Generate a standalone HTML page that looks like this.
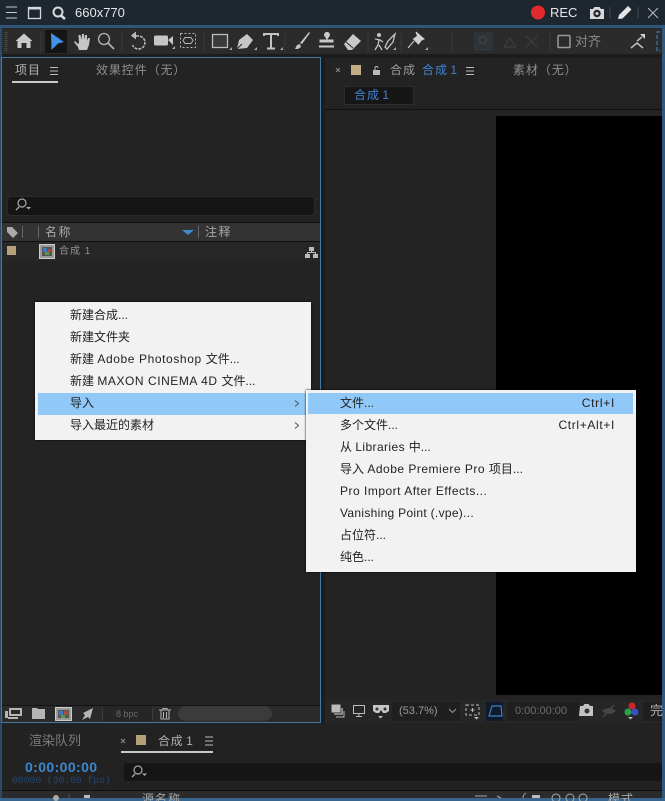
<!DOCTYPE html>
<html lang="zh"><head><meta charset="utf-8"><style>
html,body{margin:0;padding:0;background:#1c1c1c}
#p{position:relative;width:665px;height:801px;overflow:hidden;background:#1d1d1d;font-family:"Liberation Sans","Noto Sans CJK SC",sans-serif}
#p div{position:absolute}
.t{white-space:nowrap;line-height:16px;font-size:12px;color:#8f8f8f}
.m{white-space:nowrap;line-height:16px;font-size:12px;color:#222}
svg{position:absolute;left:0;top:0}
</style></head><body><div id="p">
<div style="left:0;top:0;width:665px;height:25px;background:#1e2630"></div>
<div style="left:0;top:25px;width:665px;height:3px;background:#30557a"></div>
<div style="left:2px;top:28px;width:663px;height:26px;background:#2b2b2b"></div>
<div style="left:2px;top:54px;width:663px;height:4px;background:#1c1c1c"></div>
<div style="left:0;top:28px;width:2px;height:773px;background:#2c4a68"></div>
<div style="left:662px;top:28px;width:3px;height:773px;background:#2f5a80"></div>
<div style="left:0;top:798px;width:665px;height:3px;background:#37658d"></div>

<div style="left:1px;top:57px;width:318px;height:664px;background:#232323;border:1px solid #47799f"></div>
<div style="left:325px;top:58px;width:337px;height:665px;background:#232323"></div>
<div style="left:496px;top:116px;width:166px;height:579px;background:#000"></div>
<div style="left:325px;top:109px;width:337px;height:1px;background:#111"></div>
<div style="left:345px;top:87px;width:68px;height:17px;background:#161616;box-shadow:0 0 0 1px #2c2c2c"></div>

<!-- project panel -->
<div style="left:12px;top:81px;width:46px;height:2px;background:#c9c9c9"></div>
<div style="left:8px;top:197px;width:306px;height:18px;background:#151515;border-radius:3px;box-shadow:0 0 0 1px #2b2b2b"></div>
<div style="left:2px;top:222px;width:318px;height:20px;background:#333;border-top:1px solid #0f0f0f;border-bottom:1px solid #0f0f0f;box-sizing:border-box"></div>
<div style="left:2px;top:242px;width:318px;height:19px;background:#272727"></div>
<div style="left:7px;top:246px;width:9px;height:9px;background:#b5a079"></div>
<div style="left:2px;top:705px;width:318px;height:17px;background:#2a2a2a;border-top:1px solid #141414;box-sizing:border-box"></div>
<div style="left:178px;top:706px;width:94px;height:15px;background:#3b3b3b;border-radius:8px"></div>
<div style="left:102px;top:706px;width:50px;height:15px;background:#262626"></div>

<!-- viewer bar -->
<div style="left:325px;top:700px;width:337px;height:23px;background:#262626"></div>
<div style="left:392px;top:702px;width:68px;height:19px;background:#1f1f1f"></div>
<div style="left:507px;top:702px;width:72px;height:19px;background:#1f1f1f"></div>
<div style="left:643px;top:702px;width:19px;height:19px;background:#1f1f1f"></div>
<div style="left:486px;top:702px;width:17px;height:19px;background:#101a28"></div>

<!-- timeline -->
<div style="left:2px;top:723px;width:660px;height:75px;background:#222"></div>
<div style="left:121px;top:751px;width:92px;height:2px;background:#c9c9c9"></div>
<div style="left:136px;top:735px;width:10px;height:10px;background:#b5a079"></div>
<div style="left:124px;top:763px;width:538px;height:18px;background:#151515;border-radius:3px"></div>
<div style="left:2px;top:790px;width:660px;height:1px;background:#0f0f0f"></div>
<div style="left:2px;top:791px;width:660px;height:7px;background:#2b2b2b"></div>

<svg width="665" height="801" viewBox="0 0 665 801" fill="none">
<!-- top bar -->
<path d="M6 7H17M6 12.500H17M6 18H17" stroke="#c4c8cc"/>
<rect x="28.500" y="7.500" width="12" height="11" stroke="#d5d8da" stroke-width="1.300"/><path d="M28 8.500H41" stroke="#d5d8da" stroke-width="2"/>
<circle cx="58" cy="12" r="4.500" stroke="#d8dadc" stroke-width="2"/><path d="M61 15.500L65 19" stroke="#d8dadc" stroke-width="2.500"/>
<circle cx="538" cy="12.500" r="7" fill="#e02a2e"/>
<path d="M590 9h3l1.500-2h5l1.500 2h3v10h-14z" fill="#d8d8d8"/><circle cx="597" cy="13.500" r="3.200" fill="#20262e" stroke="#20262e"/><circle cx="597" cy="13.500" r="1.500" fill="#d8d8d8"/>
<path d="M610 7v11M638 7v11" stroke="#454b52"/>
<path d="M618 19l1-4 9-9 3.500 3.500-9 9z" fill="#e4e4e4"/>
<path d="M648 8l10 10M658 8l-10 10" stroke="#b8bcc0"/>
<!-- toolbar -->
<path d="M6 32v19" stroke="#4a4a4a" stroke-width="3" stroke-dasharray="1 1"/>
<path d="M15.500 41l8.500-7.500 8.500 7.500h-2v7h-4v-5h-5v5h-4v-7z" fill="#c9c9c9"/>
<rect x="45" y="30" width="22" height="23" fill="#151515"/>
<path d="M51 33l13 9-6 1.500-6.500 6.500z" fill="#3f93e4"/>
<path d="M74 42l4 5 1 3h8l2-5 1-7-2 0-1 3 0-6h-2l-1 5 0-6h-2l-.5 6-1-5h-2l.5 8-1 1-3-3z" fill="#c6c6c6"/>
<circle cx="104" cy="39" r="5.500" stroke="#b5b5b5" stroke-width="1.300"/><path d="M108 43l6 6" stroke="#b5b5b5" stroke-width="1.600"/>
<path d="M122 32v20M41 32v20M204 32v20M285 32v20M368 32v20M401 32v20M452 32v20M550 32v20" stroke="#3a3a3a"/>
<path d="M132 36h6.500a6.500 6.500 0 1 1-6 9" stroke="#bbb" stroke-width="1.500" stroke-dasharray="3 1"/><path d="M136 31.500v8l-5-4z" fill="#bbb"/>
<rect x="154" y="35.500" width="14" height="10" rx="1.500" fill="#c6c6c6"/><path d="M168 40l5-4v9z" fill="#c6c6c6"/>
<rect x="180.500" y="33.500" width="15" height="14" stroke="#b5b5b5" stroke-dasharray="2 2"/><path d="M185 37.500h6l2 3-2 3h-6l-2-3z" stroke="#b5b5b5"/>
<rect x="212.500" y="34.500" width="15" height="13" fill="#3a3a3a" stroke="#bdbdbd" stroke-width="1.300"/>
<path d="M237 49l2-9 8-6 6 6-6 8z" fill="#c6c6c6"/><path d="M237 49l5-5" stroke="#2b2b2b"/>
<path d="M264 36v-2h14v2M271 34v14M267 48.500h8" stroke="#c4c4c4" stroke-width="2"/>
<path d="M295 49l2-4 3-1 1 3-3 2zM300 43l9-11 1 1-8 11z" fill="#c4c4c4"/>
<path d="M326.500 39.500l-1-2a3 3 0 1 1 3 0l-1 2h6v3h-14v-3zM319 45.500h15v2h-15z" fill="#c8c8c8"/>
<path d="M344 44l9-10 8 7-9 9h-4z" fill="#c8c8c8"/><path d="M346 42l7 6" stroke="#2b2b2b"/>
<circle cx="379" cy="35" r="2" fill="#c4c4c4"/><path d="M375 39l5 1 3 2M379 40l-1 5-3 5M379 45l3 5M385 47l3-6 7-7-2 8-6 7z" stroke="#c4c4c4" stroke-width="1.300"/>
<path d="M416 32l8 7-2.500 1-3 4-5-5 4-3zM414 41l-6 7" fill="#cfcfcf" stroke="#cfcfcf"/>
<rect x="474" y="32" width="19" height="19" fill="#2f3438"/><circle cx="483" cy="40" r="3.500" stroke="#42474b"/>
<path d="M504 47l6-9 6 9z" stroke="#414141"/><path d="M526 36l11 11M537 36l-11 11" stroke="#414141"/>
<rect x="558" y="35.500" width="12" height="12" rx="1" stroke="#9a9a9a" stroke-width="1.500"/>
<path d="M631 48l6-5 6 5M637 41l5-4" stroke="#c0c0c0" stroke-width="1.500"/><path d="M640 34h5v5z" fill="#d4d4d4"/>
<path d="M660 32h-3v19h3" stroke="#3a6d9b" stroke-width="1.400" stroke-dasharray="4 2"/>
<!-- corner carets -->
<path d="M172 49h3v-3zM229 50h3v-3zM254 50h3v-3zM280 50h3v-3zM393 50h3v-3zM425 50h3v-3z" fill="#aaa"/>
<!-- tabs menu icons -->
<path d="M50 67.500h8M50 71h8M50 74.500h8M466 67.500h8M466 71h8M466 74.500h8M205 737h8M205 741h8M205 745h8" stroke="#bbb"/>
<path d="M336 68l4 4M340 68l-4 4M121 739l4 4M125 739l-4 4" stroke="#8a8a8a"/>
<rect x="351" y="65" width="10" height="10" fill="#c4ad85"/>
<rect x="373" y="70" width="7" height="5" fill="#bbb"/><path d="M375 70v-2a1.500 1.500 0 0 1 3 0" stroke="#bbb"/>
<!-- search icons -->
<circle cx="22" cy="203" r="4" stroke="#aaa" stroke-width="1.200"/><path d="M19 207l-3 3" stroke="#aaa" stroke-width="1.300"/><path d="M26 207h5l-2.500 2.500z" fill="#aaa"/>
<circle cx="138" cy="770" r="4" stroke="#aaa" stroke-width="1.200"/><path d="M135 774l-3 3" stroke="#aaa" stroke-width="1.300"/><path d="M142 773.500h5l-2.500 2.500z" fill="#aaa"/>
<!-- list header -->
<path d="M7 227h5l6 6-5 5-6-6z" fill="#aaa"/>
<path d="M22.500 226v12M38.500 226v12M198.500 226v12" stroke="#666"/>
<path d="M182 230h12l-6 5z" fill="#3f8ad4"/>
<!-- comp icon -->
<rect x="39.500" y="244.500" width="15" height="14" fill="#999" stroke="#ccc"/><rect x="42" y="247" width="10" height="9" fill="#555"/><rect x="43" y="248" width="4" height="4" fill="#3d7bc4"/><rect x="48" y="249" width="3" height="3" fill="#b04a3a"/><rect x="45" y="252" width="4" height="3" fill="#5a9a50"/>
<path d="M309 247h5v4h-5zM305 254h5v4h-5zM313 254h5v4h-5z" fill="#bbb"/><path d="M311.500 251v2M307.500 254v-1.500h8v1.500" stroke="#bbb"/>
<!-- project footer icons -->
<rect x="9" y="708" width="13" height="8" fill="#b5b5b5"/><rect x="11" y="710" width="9" height="4" fill="#2a2a2a"/><path d="M5 711h3v7H5zM8 717h10v2H8z" fill="#b5b5b5"/>
<path d="M32 708h5l1 1h7v10H32z" fill="#b5b5b5"/>
<rect x="55.500" y="707.500" width="16" height="13" fill="#999" stroke="#ccc"/><rect x="58" y="710" width="11" height="8" fill="#555"/><rect x="59" y="711" width="4" height="4" fill="#3d7bc4"/><rect x="64" y="711" width="4" height="4" fill="#b04a3a"/><rect x="61" y="715" width="4" height="3" fill="#5a9a50"/>
<path d="M93 708l-10 5 2 2-3 5 6-3 2 2z" fill="#b5b5b5"/>
<path d="M159 710h12M161 710v9h8v-9M163.500 712v6M166.500 712v6M163 710v-1.500h4v1.500" stroke="#b5b5b5"/>
<path d="M152.500 708v12M102.500 708v12" stroke="#3c3c3c"/>
<!-- viewer bar icons -->
<rect x="331.500" y="704.500" width="9" height="8" fill="#bbb"/><path d="M342 708v6h-8" stroke="#bbb" stroke-width="1.300"/><path d="M344 711v6h-8" stroke="#bbb"/>
<rect x="353.500" y="705.500" width="11" height="8" stroke="#bbb"/><path d="M356 716.500h6M359 714v2" stroke="#bbb"/>
<path d="M373 705h16v6l-3 2h-3l-2-3-2 3h-3l-3-2z" fill="#c5c5c5"/><circle cx="377" cy="709" r="1.500" fill="#333"/><circle cx="385" cy="709" r="1.500" fill="#333"/><path d="M378 716h5l-2.500 2.500z" fill="#bbb"/>
<path d="M449 709l3.500 3.500 3.500-3.500" stroke="#999"/>
<path d="M466 705h13v10h-13z" stroke="#bbb" stroke-dasharray="3 2"/><path d="M472.500 708v4M470.500 710h4" stroke="#bbb"/><path d="M474 717h5l-2.500 2.500z" fill="#bbb"/>
<path d="M489 716l3-10h9l1 10z" stroke="#3f7fc4" stroke-width="1.200"/>
<path d="M580 706h3l1.500-2h4l1.500 2h3v10h-14z" fill="#c4c4c4"/><circle cx="587" cy="711" r="2.500" fill="#333"/>
<path d="M602 711q7-6 14 0q-7 6-14 0z" fill="#454545"/><path d="M603 717l11-12" stroke="#454545" stroke-width="1.500"/>
<circle cx="632" cy="706" r="3.500" fill="#c8282c"/><circle cx="628" cy="712" r="3.500" fill="#2ba14a"/><circle cx="635" cy="712" r="3.500" fill="#3553c4"/><path d="M628 717h5l-2.500 2.500z" fill="#bbb"/>
<!-- timeline header clipped icons -->
<circle cx="56" cy="798" r="3" fill="#aaa"/><path d="M69 794v4M88 794v4" stroke="#555"/><path d="M84 795h6v3h-6z" fill="#bbb"/>
<path d="M475 796h12M497 796l4 2M523 798a6 6 0 0 1 3-5" stroke="#aaa"/><rect x="532" y="795" width="8" height="3" fill="#bbb"/><circle cx="556" cy="798" r="4" stroke="#aaa"/><circle cx="570" cy="798" r="4" stroke="#aaa"/><circle cx="583" cy="798" r="4" stroke="#aaa"/>
</svg>

<div class="t" style="left:75px;top:5px;color:#e4e6e8;font-size:13px">660x770</div>
<div class="t" style="left:550px;top:5px;color:#e4e6e8;font-size:13px">REC</div>
<div class="t" style="left:575px;top:34px;color:#8a8a8a;font-size:13px">对齐</div>

<div class="t" style="left:15px;top:62px;color:#b4b4b4;font-size:12px;letter-spacing:1px">项目</div>
<div class="t" style="left:96px;top:62px;font-size:12px;letter-spacing:.9px">效果控件（无）</div>
<div class="t" style="left:390px;top:62px;font-size:12px;letter-spacing:1px;color:#9a9a9a">合成</div>
<div class="t" style="left:422px;top:62px;font-size:12px;letter-spacing:1px;word-spacing:-2px;color:#3f84d2">合成 1</div>
<div class="t" style="left:513px;top:62px;font-size:12px;letter-spacing:.9px">素材（无）</div>
<div class="t" style="left:354px;top:87px;font-size:12px;letter-spacing:1px;word-spacing:-2px;color:#3f84d2">合成 1</div>

<div class="t" style="left:45px;top:224px;font-size:12px;letter-spacing:1.500px;color:#a8a8a8">名称</div>
<div class="t" style="left:205px;top:224px;font-size:12px;letter-spacing:1.500px;color:#a8a8a8">注释</div>
<div class="t" style="left:59px;top:244px;font-size:10px;letter-spacing:1px;color:#909090">合成 1</div>
<div class="t" style="left:116px;top:706px;font-size:9px;color:#6a6a6a">8 bpc</div>

<div class="t" style="left:29px;top:733px;font-size:13px;color:#7c7c7c">渲染队列</div>
<div class="t" style="left:158px;top:733px;font-size:12px;letter-spacing:.6px;word-spacing:-1px;color:#b0b0b0">合成 1</div>
<div class="t" style="left:25px;top:759px;font-size:14px;font-weight:bold;letter-spacing:.4px;color:#3d86d0">0:00:00:00</div>
<div class="t" style="left:12px;top:774px;font-size:10px;letter-spacing:-.2px;color:#24466c;font-family:'Liberation Mono','Liberation Sans',monospace">00000 (30.00 fps)</div>
<div class="t" style="left:142px;top:791px;font-size:12px;letter-spacing:1px;color:#a8a8a8">源名称</div>
<div class="t" style="left:608px;top:791px;font-size:12px;letter-spacing:1px;color:#a8a8a8">模式</div>

<div class="t" style="left:399px;top:703px;font-size:11px;color:#9a9a9a">(53.7%)</div>
<div class="t" style="left:515px;top:703px;font-size:11px;color:#6d6d6d">0:00:00:00</div>
<div class="t" style="left:650px;top:703px;font-size:13px;color:#aaa">完</div>

<!-- menu 1 -->
<div style="left:35px;top:302px;width:276px;height:138px;background:#f2f2f2;box-shadow:0 0 2px #000"></div>
<div style="left:38px;top:393px;width:270px;height:22px;background:#90c8f7"></div>
<div class="m" style="left:70px;top:307px">新建合成...</div>
<div class="m" style="left:70px;top:329px">新建文件夹</div>
<div class="m" style="left:70px;top:351px">新建 <span style="letter-spacing:.6px">Adobe Photoshop </span>文件...</div>
<div class="m" style="left:70px;top:373px">新建 <span style="letter-spacing:.55px">MAXON CINEMA 4D </span>文件...</div>
<div class="m" style="left:70px;top:395px">导入</div>
<div class="m" style="left:70px;top:417px">导入最近的素材</div>
<svg width="665" height="801" viewBox="0 0 665 801" fill="none"><path d="M295 400.500l3.500 3-3.500 3M295 422.500l3.500 3-3.500 3" stroke="#555"/></svg>

<!-- menu 2 -->
<div style="left:306px;top:390px;width:330px;height:182px;background:#f2f2f2;box-shadow:0 0 2px #000"></div>
<div style="left:308px;top:393px;width:325px;height:21px;background:#90c8f7"></div>
<div class="m" style="left:340px;top:395px">文件...</div>
<div class="m" style="left:340px;top:417px">多个文件...</div>
<div class="m" style="left:340px;top:439px">从 <span style="letter-spacing:.4px">Libraries </span>中...</div>
<div class="m" style="left:340px;top:461px">导入 <span style="letter-spacing:.5px">Adobe Premiere Pro </span>项目...</div>
<div class="m" style="left:340px;top:483px;letter-spacing:.5px">Pro Import After Effects...</div>
<div class="m" style="left:340px;top:505px;letter-spacing:.3px">Vanishing Point (.vpe)...</div>
<div class="m" style="left:340px;top:527px">占位符...</div>
<div class="m" style="left:340px;top:549px">纯色...</div>
<div class="m" style="right:50px;top:395px;letter-spacing:.7px">Ctrl+I</div>
<div class="m" style="right:50px;top:417px;letter-spacing:.65px">Ctrl+Alt+I</div>
</div></body></html>
